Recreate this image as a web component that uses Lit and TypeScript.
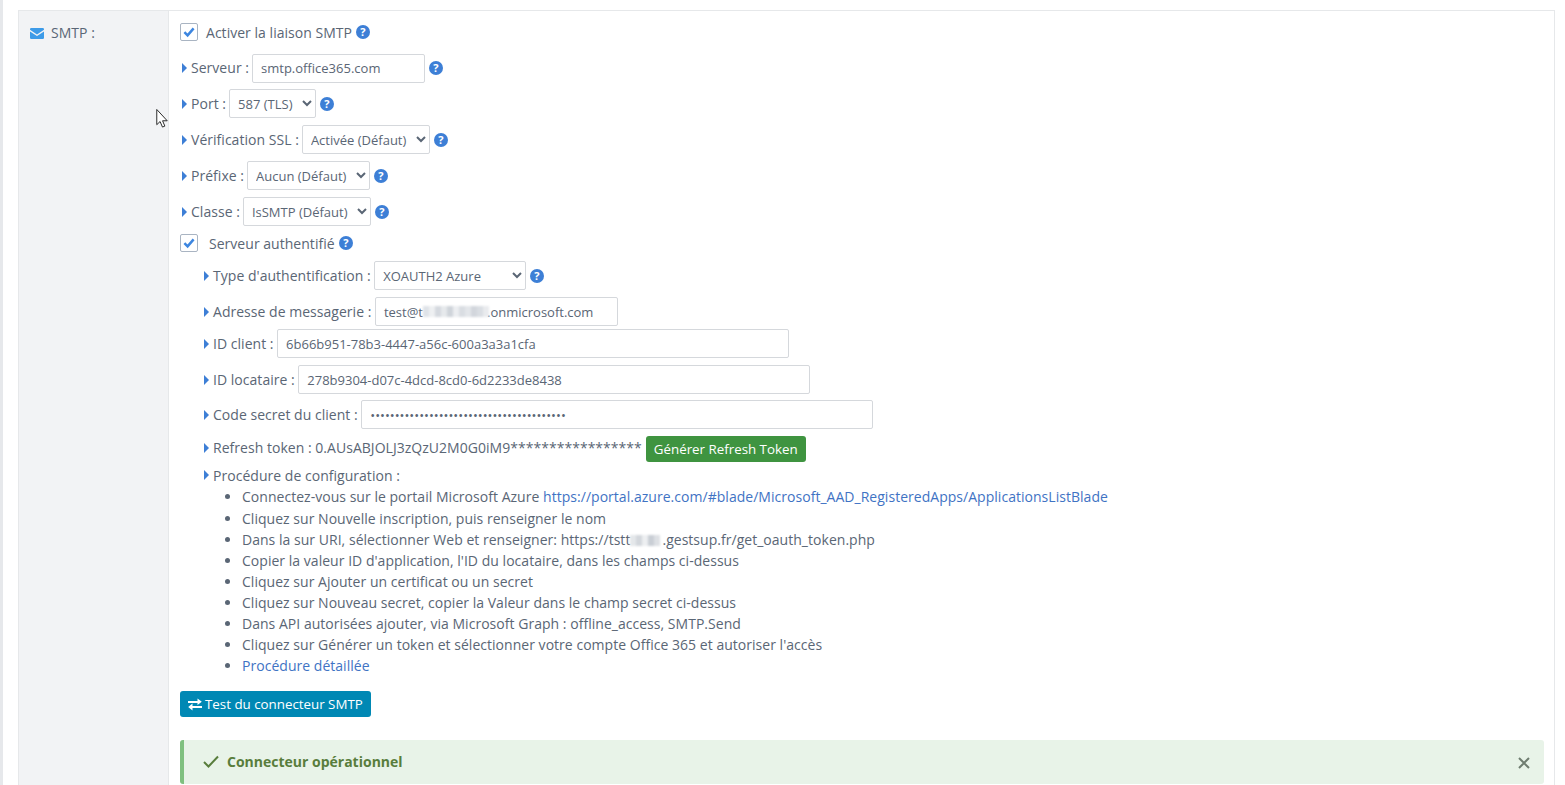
import { LitElement, html, css } from "lit";
import { customElement } from "lit/decorators.js";

const help = html`<svg class="help" viewBox="0 0 14 14"><circle cx="7" cy="7" r="7" fill="#3d7fd6"/><text x="7" y="11" text-anchor="middle" font-family="Open Sans" font-weight="700" font-size="11" fill="#fff">?</text></svg>`;
const caret = html`<svg class="caret" viewBox="0 0 5 10"><path d="M0 0 L5 5 L0 10 Z" fill="#3d7fd6"/></svg>`;
const check = html`<span class="cb"><svg viewBox="0 0 18 18" width="18" height="18"><path d="M4.4 9.2 L7.6 12.4 L13.6 5.4" fill="none" stroke="#3d86e0" stroke-width="2.5"/></svg></span>`;

const blur = (cols: string[]) => html`<span class="blur">${cols.map((c) => html`<i style="background:${c}"></i>`)}</span>`;

@customElement("app-root")
export class AppRoot extends LitElement {
  static styles = css`
    :host {
      display: block;
      position: relative;
      height: 785px;
      overflow: hidden;
      background: #fff;
      font-family: "Open Sans", sans-serif;
      font-size: 14px;
      letter-spacing: 0.03px;
      color: #5a6675;
      box-sizing: border-box;
      padding: 10px 10px 0 18px;
    }
    * { box-sizing: border-box; }
    .strip { position: absolute; left: 0; top: 0; bottom: 0; width: 3px; background: #e6e8eb; }
    .table {
      display: grid;
      grid-template-columns: 150px 1fr;
      border: 1px solid #e6e8ea;
      border-bottom: 0;
      height: 800px;
    }
    .side {
      background: #f2f3f5;
      border-right: 1px solid #e6e8ea;
      padding: 11px 0 0 11px;
      display: flex;
      align-items: flex-start;
      gap: 7px;
      line-height: 22px;
    }
    .side svg { width: 14px; height: 11px; margin-top: 6px; }
    .main { padding: 11px 10px 0 11px; }
    .row { display: flex; align-items: center; white-space: nowrap; }
    .chk { height: 20px; }
    .help { width: 14px; height: 14px; flex: none; margin-left: 4px; }
    .cb {
      width: 18px; height: 18px; border: 1px solid #a9b4c2; border-radius: 2px;
      display: inline-block; flex: none; background: #fff; margin-right: 8px;
    }
    .cb svg { display: block; margin: -1px; }
    .caret { width: 5px; height: 10px; flex: none; margin: 0 4px 0 2px; }
    .f { height: 29px; }
    .label { margin-right: 3px; }
    .sub .label { margin-right: 3.5px; }
    input, select, .input {
      height: 29px;
      border: 1px solid #d5d8dc;
      border-radius: 2px;
      background: #fff;
      font: 13px "Open Sans", sans-serif;
      letter-spacing: 0;
      color: #5a6675;
      padding: 0 8px;
      outline: none;
    }
    select { padding: 0 4px; }
    .input { display: flex; align-items: center; }
    .r1 { margin-top: 12px; }
    .r2 { margin-top: 7px; }
    .r3 { margin-top: 3px; }
    .r4 { margin-top: 6px; }
    .lift > .label, .lift > .help, .lift > .caret { margin-bottom: 2px; }
    .lift > input { padding-bottom: 2px; }
    .sub { padding-left: 22px; }
    .w173 { width: 173px; } .w87 { width: 87px; } .w128 { width: 128px; }
    .w123 { width: 123px; } .w152 { width: 152px; }
    .w243 { width: 243px; } .w512 { width: 512px; }
    .blur { display: inline-flex; height: 11px; vertical-align: -1px; filter: blur(1px); }
    .blur i { width: 6px; height: 11px; display: block; }
    .gap2 { margin-right: 2px; display: inline-block; }
    .btn {
      display: inline-flex; align-items: center; height: 26px; border-radius: 3px;
      color: #fff; font-size: 13.33px; padding: 0 8px; border: 0;
      font-family: "Open Sans", sans-serif;
    }
    .green { background: #3f9440; margin-left: 4px; }
    .blue { background: #0088b4; }
    .blue svg { width: 14px; height: 13px; margin-right: 3px; }
    .token { display: flex; align-items: center; margin-top: -3px; }
    ul { margin: 1px 0 0; padding: 0 0 0 62px; line-height: 21px; }
    li { height: 21px; white-space: nowrap; }
    li:first-child { height: 22px; }
    a { color: #3f73c4; text-decoration: none; }
    .alert {
      height: 44px;
      background: #e8f3e8;
      border-left: 4px solid #7fc07f;
      border-radius: 3px;
      display: flex; align-items: center;
      color: #587d3c; font-weight: 700; font-size: 14px; letter-spacing: 0;
      padding: 0 14px 2px 19px;
      margin-top: 23px;
    }
    .alert .ok { width: 16px; height: 13px; margin-right: 8px; }
    .alert .x { width: 12px; height: 12px; margin-left: auto; margin-top: 3px; }
    .cursor { position: absolute; left: 156px; top: 109px; width: 12px; height: 19px; }
  `;

  render() {
    return html`
      <div class="strip"></div>
      <div class="table">
        <div class="side">
          <svg viewBox="0 0 14 11"><path d="M0 1.2 A1.2 1.2 0 0 1 1.2 0 H12.8 A1.2 1.2 0 0 1 14 1.2 V1.8 L7 6.4 L0 1.8 Z M0 3.4 L7 8 L14 3.4 V9.8 A1.2 1.2 0 0 1 12.8 11 H1.2 A1.2 1.2 0 0 1 0 9.8 Z" fill="#3d9be8"/></svg>
          <span>SMTP :</span>
        </div>
        <div class="main">
          <div class="row chk">${check}<span>Activer la liaison SMTP</span>${help}</div>
          <div class="row f r1 lift">${caret}<span class="label">Serveur :</span><input class="w173" value="smtp.office365.com" />${help}</div>
          <div class="row f r4">${caret}<span class="label">Port :</span><select class="w87"><option>587 (TLS)</option></select>${help}</div>
          <div class="row f r2">${caret}<span class="label">Vérification SSL :</span><select class="w128"><option>Activée (Défaut)</option></select>${help}</div>
          <div class="row f r2">${caret}<span class="label">Préfixe :</span><select class="w123"><option>Aucun (Défaut)</option></select>${help}</div>
          <div class="row f r2">${caret}<span class="label">Classe :</span><select class="w128"><option>IsSMTP (Défaut)</option></select>${help}</div>
          <div class="row chk r2">${check}<span style="margin-left:3px">Serveur authentifié</span>${help}</div>
          <div class="sub">
            <div class="row f" style="margin-top:8px">${caret}<span class="label">Type d'authentification :</span><select class="w152"><option>XOAUTH2 Azure</option></select>${help}</div>
            <div class="row f r2">${caret}<span class="label">Adresse de messagerie :</span><div class="input w243">test@t${blur(["#dfe3e8", "#eef0f2", "#d5d9df", "#e6e9ec", "#cfd4da", "#eceef1", "#d9dde2", "#e3e6ea", "#d2d6dc", "#dadee3", "#e9ebee"])}<span style="margin-left:-2px">.onmicrosoft.com</span></div></div>
            <div class="row f r3">${caret}<span class="label">ID client :</span><input class="w512" value="6b66b951-78b3-4447-a56c-600a3a3a1cfa" /></div>
            <div class="row f r2">${caret}<span class="label">ID locataire :</span><input class="w512" value="278b9304-d07c-4dcd-8cd0-6d2233de8438" /></div>
            <div class="row f r4">${caret}<span class="label">Code secret du client :</span><input class="w512" type="password" value="0123456789012345678901234567890123456789" /></div>
            <div class="row" style="margin-top:7px;height:26px"><span class="token">${caret}<span>Refresh token : 0.AUsABJOLJ3zQzU2M0G0iM9*****************</span></span><button class="btn green">Générer Refresh Token</button></div>
            <div class="row" style="margin-top:3px;height:20px">${caret}<span>Procédure de configuration :</span></div>
          </div>
          <ul>
            <li>Connectez-vous sur le portail Microsoft Azure <a>https://portal.azure.com/#blade/Microsoft_AAD_RegisteredApps/ApplicationsListBlade</a></li>
            <li>Cliquez sur Nouvelle inscription, puis renseigner le nom</li>
            <li>Dans la sur URI, sélectionner Web et renseigner: https://tstt<span class="gap2">${blur(["#e4e7ea", "#d3d7dc", "#edeff1", "#c9ced5", "#dde0e4"])}</span>.gestsup.fr/get_oauth_token.php</li>
            <li>Copier la valeur ID d'application, l'ID du locataire, dans les champs ci-dessus</li>
            <li>Cliquez sur Ajouter un certificat ou un secret</li>
            <li>Cliquez sur Nouveau secret, copier la Valeur dans le champ secret ci-dessus</li>
            <li>Dans API autorisées ajouter, via Microsoft Graph : offline_access, SMTP.Send</li>
            <li>Cliquez sur Générer un token et sélectionner votre compte Office 365 et autoriser l'accès</li>
            <li><a>Procédure détaillée</a></li>
          </ul>
          <button class="btn blue" style="margin-top:15px">
            <svg viewBox="0 0 14 13"><path d="M0 3 H9.5 V0.5 L13.8 3.8 L9.5 7 V5 H0 Z M14 8 H4.5 V5.6 L0.2 9 L4.5 12.4 V10 H14 Z" fill="#fff"/></svg>Test du connecteur SMTP
          </button>
          <div class="alert">
            <svg class="ok" viewBox="0 0 16 13"><path d="M1 7 L5.5 11.5 L15 1.5" fill="none" stroke="#587d3c" stroke-width="2"/></svg>
            <span>Connecteur opérationnel</span>
            <svg class="x" viewBox="0 0 12 12"><path d="M1 1 L11 11 M11 1 L1 11" stroke="#6f7d70" stroke-width="2"/></svg>
          </div>
        </div>
      </div>
      <svg class="cursor" viewBox="0 0 12 20"><path d="M0.5 0.5 V16.5 L4 13.2 L6.5 19 L9 18 L6.6 12.4 H11.5 Z" fill="#fff" stroke="#222" stroke-width="1"/></svg>
    `;
  }
}
